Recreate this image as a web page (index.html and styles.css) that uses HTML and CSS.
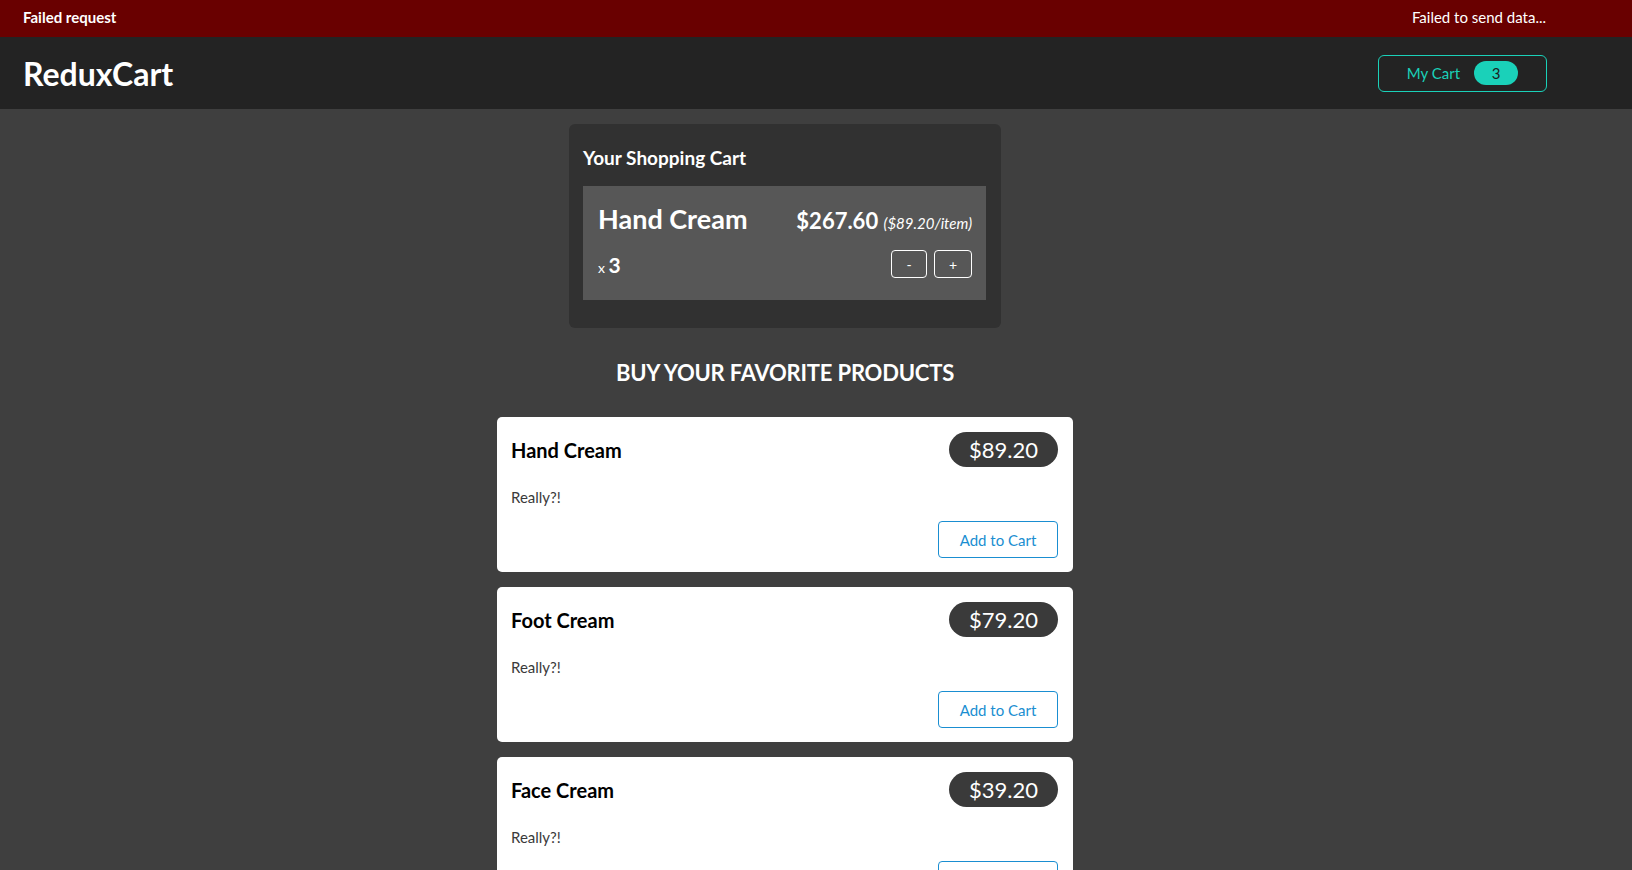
FILE: index.html
```html
<!DOCTYPE html>
<html lang="en">
<head>
<meta charset="utf-8">
<title>ReduxCart</title>
<link rel="stylesheet" href="styles.css">
</head>
<body>
<section class="notification">
  <h2 class="notification-title">Failed request</h2>
  <p class="notification-msg">Failed to send data...</p>
</section>
<header class="header">
  <h1 class="logo">ReduxCart</h1>
  <nav>
    <button class="cart-button"><span>My Cart</span><span class="badge">3</span></button>
  </nav>
</header>
<main class="main">
  <section class="cart">
    <h2 class="cart-title">Your Shopping Cart</h2>
    <ul class="cart-list">
      <li class="cart-item">
        <div class="cart-item-top">
          <h3 class="cart-item-name">Hand Cream</h3>
          <div class="cart-item-price">$267.60 <span class="item-price">($89.20/item)</span></div>
        </div>
        <div class="cart-item-bottom">
          <div class="quantity">x <span>3</span></div>
          <div class="actions">
            <button class="qty-btn">-</button>
            <button class="qty-btn">+</button>
          </div>
        </div>
      </li>
    </ul>
  </section>
  <section class="products">
    <h2 class="products-title">BUY YOUR FAVORITE PRODUCTS</h2>
    <ul class="product-list">
      <li class="product">
        <div class="product-top"><h3 class="product-name">Hand Cream</h3><div class="price">$89.20</div></div>
        <p class="product-desc">Really?!</p>
        <div class="product-actions"><button class="add-btn">Add to Cart</button></div>
      </li>
      <li class="product">
        <div class="product-top"><h3 class="product-name">Foot Cream</h3><div class="price">$79.20</div></div>
        <p class="product-desc">Really?!</p>
        <div class="product-actions"><button class="add-btn">Add to Cart</button></div>
      </li>
      <li class="product">
        <div class="product-top"><h3 class="product-name">Face Cream</h3><div class="price">$39.20</div></div>
        <p class="product-desc">Really?!</p>
        <div class="product-actions"><button class="add-btn">Add to Cart</button></div>
      </li>
    </ul>
  </section>
</main>
</body>
</html>
```
FILE: styles.css
```css
* { box-sizing: border-box; }
html, body { margin: 0; padding: 0; }
body {
  font-family: Lato, "Liberation Sans", sans-serif;
  background: #3f3f3f;
  color: #fff;
}
h1, h2, h3, p, ul { margin: 0; padding: 0; }
ul { list-style: none; }
button { font-family: inherit; cursor: pointer; }

.notification {
  height: 37px;
  background: #690000;
  display: flex;
  justify-content: space-between;
  align-items: center;
  padding: 0 86px 3px 23px;
}
.notification-title { font-size: 15px; font-weight: 700; }
.notification-msg { font-size: 15px; }

.header {
  height: 72px;
  background: #232323;
  display: flex;
  justify-content: space-between;
  align-items: center;
  padding: 0 85px 0 23px;
}
.logo { font-size: 32px; font-weight: 700; }
.cart-button {
  width: 169px;
  height: 37px;
  background: transparent;
  border: 1px solid #1ad1b9;
  border-radius: 6px;
  color: #1ad1b9;
  font-size: 15px;
  display: flex;
  align-items: center;
  justify-content: center;
  padding: 0;
}
.badge {
  background: #1ad1b9;
  color: #1d1d1d;
  border-radius: 30px;
  width: 44px;
  height: 24px;
  margin-left: 14px;
  display: flex;
  align-items: center;
  justify-content: center;
}

.main {
  padding: 15px 62px 0 0;
  display: flex;
  flex-direction: column;
  align-items: center;
}

.cart {
  width: 432px;
  background: #313131;
  border-radius: 6px;
  padding: 22px 15px 28px 14px;
}
.cart-title { font-size: 19px; font-weight: 700; margin-bottom: 17px; }
.cart-item {
  background: #575757;
  padding: 16px 14px 22px 15px;
}
.cart-item-top {
  display: flex;
  justify-content: space-between;
  align-items: baseline;
}
.cart-item-name { font-size: 27px; font-weight: 700; }
.cart-item-price { font-size: 22px; font-weight: 700; }
.item-price { font-size: 15px; font-weight: 400; font-style: italic; }
.cart-item-bottom {
  margin-top: 15px;
  display: flex;
  justify-content: space-between;
  align-items: center;
}
.quantity { font-size: 14px; }
.quantity span { font-size: 21px; font-weight: 700; }
.actions { display: flex; gap: 7px; }
.qty-btn {
  height: 28px;
  min-width: 36px;
  background: transparent;
  border: 1px solid #fff;
  border-radius: 4px;
  color: #fff;
  font-size: 14px;
}
.qty-btn + .qty-btn { min-width: 38px; }

.products { display: flex; flex-direction: column; align-items: center; margin-top: 31px; }
.products-title { font-size: 22px; font-weight: 700; letter-spacing: -0.2px; margin-bottom: 31px; }
.product-list { width: 576px; display: flex; flex-direction: column; gap: 15px; }
.product {
  background: #fff;
  color: #000;
  border-radius: 5px;
  padding: 15px 15px 14px 14px;
  height: 155px;
  display: flex;
  flex-direction: column;
}
.product-top {
  display: flex;
  justify-content: space-between;
  align-items: center;
}
.product-name { font-size: 20px; font-weight: 700; }
.price {
  background: #3a3a3a;
  color: #fff;
  border-radius: 30px;
  height: 35px;
  width: 109px;
  display: flex;
  align-items: center;
  justify-content: center;
  font-size: 22px;
}
.product-desc { color: #3a3a3a; font-size: 15px; margin-top: 21px; }
.product-actions { display: flex; justify-content: flex-end; margin-top: auto; }
.add-btn {
  width: 120px;
  height: 37px;
  background: transparent;
  border: 1px solid #1a8ed1;
  border-radius: 4px;
  color: #1a8ed1;
  font-size: 15px;
}
```
